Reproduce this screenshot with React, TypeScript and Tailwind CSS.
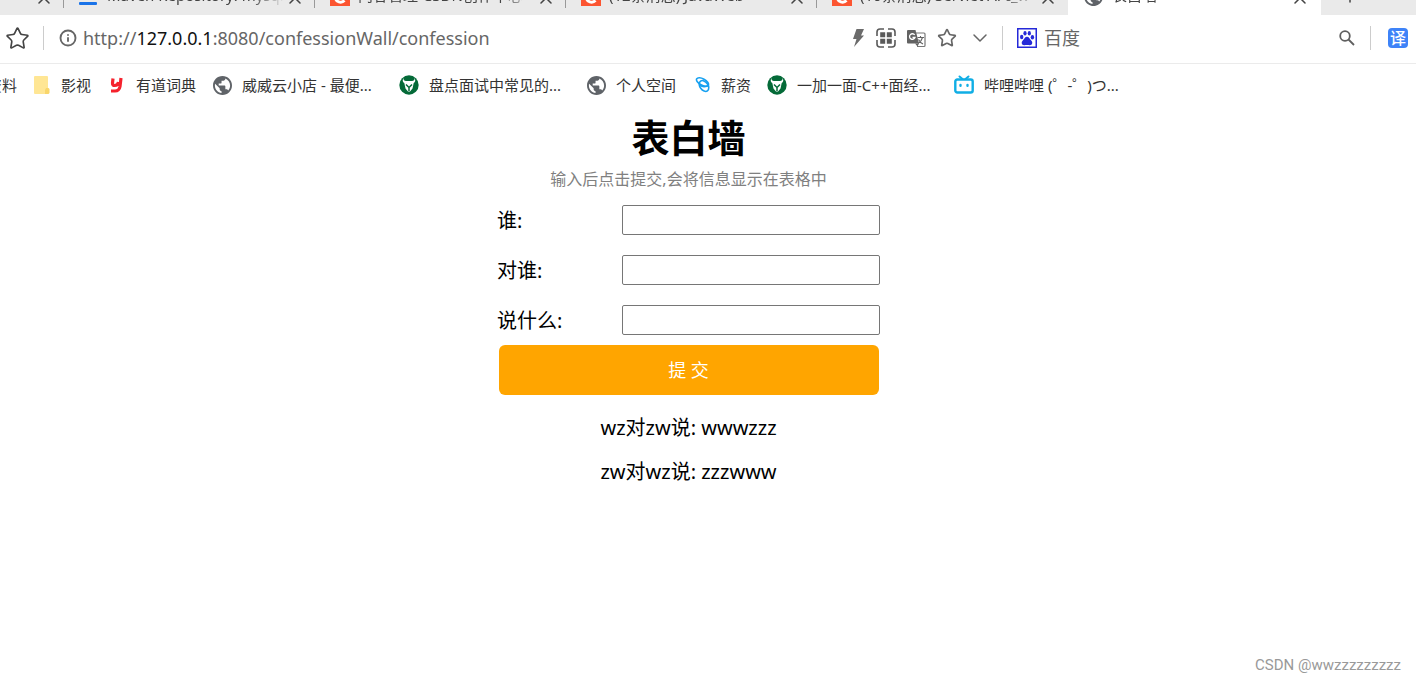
import type { ReactNode } from 'react'
import { ChevronDown, Info, Plus, Star, X } from 'lucide-react'

interface Tab {
  title: string
  icon: ReactNode
  width: string
  active?: boolean
}

interface Bookmark {
  title: string
  icon: ReactNode
  width: string
}

const GlobeIcon = () => (
  <svg width="19" height="19" viewBox="2 2 20 20" className="shrink-0" aria-hidden="true">
    <path d="M12 2C6.480 2 2 6.480 2 12s4.480 10 10 10 10-4.480 10-10S17.520 2 12 2zm-1 17.930c-3.950-.49-7-3.850-7-7.930 0-.62.08-1.210.21-1.790L9 15v1c0 1.100.9 2 2 2v1.930zm6.900-2.540c-.26-.81-1-1.390-1.900-1.390h-1v-3c0-.55-.45-1-1-1H8v-2h2c.55 0 1-.45 1-1V7h2c1.100 0 2-.9 2-2v-.41c2.930 1.190 5 4.060 5 7.410 0 2.080-.8 3.970-2.100 5.390z" fill="#5f6368" />
  </svg>
)

const CsdnIcon = () => (
  <svg width="20" height="20" viewBox="0 0 20 20" className="shrink-0" aria-hidden="true">
    <rect width="20" height="20" fill="#fc5531" />
    <path d="M14.500 6.500C12 4 5.500 5 5.500 11c0 5.500 6 6.500 9 3.500" fill="none" stroke="#fff" strokeWidth="3" />
  </svg>
)

const MavenIcon = () => (
  <svg width="18" height="18" viewBox="0 0 18 18" className="shrink-0" aria-hidden="true">
    <rect y="15" width="18" height="3" rx="1" fill="#1a73e8" />
  </svg>
)

const FolderIcon = () => (
  <svg width="17" height="18" viewBox="0 0 17 18" className="shrink-0" aria-hidden="true">
    <path d="M1 0h12q1 0 1 1v17H1q-1 0-1-1V1q0-1 1-1Z" fill="#ffe694" />
    <path d="M12 12h2.500l1 1v4l-1 1H11v-4Z" fill="#f9d66b" />
  </svg>
)

const YoudaoIcon = () => (
  <svg width="16" height="16" viewBox="0 0 16 16" className="shrink-0" aria-hidden="true">
    <path d="M3 1.500 2.500 6q-.2 2.500 2.200 2.500Q8 8.500 8.500 5M11 1 10 9.500Q9.200 14 5 14H1" fill="none" stroke="#f5222d" strokeWidth="3.200" />
  </svg>
)

const BullIcon = () => (
  <svg width="20" height="20" viewBox="0 0 20 20" className="shrink-0" aria-hidden="true">
    <circle cx="10" cy="10" r="9.700" fill="#046a38" />
    <path d="M4.500 3C3 6 4 7.200 5.300 8l1.200 5.500L9 16.500h2l2.500-3L14.700 8C16 7.200 17 6 15.500 3c.2 2.300-.8 3-2.500 3H7c-1.700 0-2.700-.7-2.500-3Z" fill="#fff" />
    <path d="m7 9.500 3 3 3-3M10 12.500V16" fill="none" stroke="#046a38" strokeWidth="1.500" />
  </svg>
)

const SalaryIcon = () => (
  <svg width="16" height="16" viewBox="0 0 16 16" className="shrink-0" aria-hidden="true">
    <g fill="none" stroke="#16a0f0" strokeWidth="1.600">
      <ellipse cx="7.500" cy="5" rx="6.600" ry="3.200" transform="rotate(28 7.500 5)" />
      <ellipse cx="9" cy="9" rx="6" ry="4" transform="rotate(55 9 9)" />
      <path d="M4 7.500c2.500 2.500 7 3 9.800.5" />
    </g>
  </svg>
)

const BilibiliIcon = () => (
  <svg width="20" height="20" viewBox="0 0 20 20" className="shrink-0" aria-hidden="true">
    <g fill="none" stroke="#10aee5" strokeLinecap="round">
      <rect x="1.300" y="4.500" width="17.400" height="13" rx="2" strokeWidth="2.400" />
      <path d="m5.500 1.500 3 2.500m6-2.500-3 2.500" strokeWidth="2" />
      <path d="M6.500 10v.8m7-.8v.8" strokeWidth="2.400" />
    </g>
  </svg>
)

const BoltIcon = () => (
  <svg width="13" height="20" viewBox="0 0 13 20" aria-hidden="true">
    <path d="M4.500 1H12L9 7.500h3L2 19l2.500-8H1Z" fill="#6b6b6b" />
  </svg>
)

const QrIcon = () => (
  <svg width="20" height="20" viewBox="0 0 20 20" aria-hidden="true">
    <path d="M1 8V4q0-3 3-3h4m4 0h4q3 0 3 3v4m0 4v4q0 3-3 3h-4m-4 0H4q-3 0-3-3v-4" fill="none" stroke="#5a5a5a" strokeWidth="1.600" />
    <path d="M4.200 4.200h5v5h-5Zm6.600 0h5v5h-5Zm-6.600 6.600h5v5h-5Zm6.600 0h5v5h-5Z" fill="#5a5a5a" />
  </svg>
)

const TranslateIcon = () => (
  <svg width="19" height="19" viewBox="0 0 19 19" aria-hidden="true">
    <path d="M9 4h8q1 0 1 1v11.500q0 1-1 1h-7" fill="#fff" stroke="#777" strokeWidth="1.200" />
    <path d="M1 1h7.500L12 14.500H1q-1 0-1-1V2q0-1 1-1Z" fill="#636363" />
    <path d="M7.700 6A2.800 2.800 0 1 0 8 8.500H5.500" fill="none" stroke="#fff" strokeWidth="1.300" />
    <path d="M10.500 8.500H17M13.500 7v1.500m2 0q-1 4-4.500 6m.5-4q1.500 3 4.500 4.500" fill="none" stroke="#636363" strokeWidth="1.100" />
    <path d="m8 14.500 2.500 3 1.500-3Z" fill="#636363" />
  </svg>
)

const BaiduIcon = () => (
  <svg width="20" height="20" viewBox="0 0 20 20" className="shrink-0" aria-hidden="true">
    <rect x=".75" y=".75" width="18.500" height="18.500" fill="#fff" stroke="#2529d8" strokeWidth="1.500" />
    <g fill="#2529d8">
      <ellipse cx="4.700" cy="9" rx="1.700" ry="2.200" />
      <ellipse cx="8" cy="5.200" rx="1.600" ry="2.200" />
      <ellipse cx="12.300" cy="5.200" rx="1.600" ry="2.200" />
      <ellipse cx="15.400" cy="9.200" rx="1.700" ry="2.200" />
      <path d="M10 8.800c2 0 2.600 2.200 4.200 3.700 2 1.900 1 4.900-1.500 4.700-1.800-.2-3.600-.2-5.400 0-2.500.2-3.500-2.800-1.500-4.700C7.400 11 8 8.800 10 8.800Z" />
    </g>
  </svg>
)

const SearchIcon = () => (
  <svg width="16" height="16" viewBox="0 0 16 16" aria-hidden="true">
    <g fill="none" stroke="#5f5f5f" strokeWidth="1.800">
      <circle cx="6" cy="6" r="4.800" />
      <path d="m9.500 9.500 5.500 5.500" />
    </g>
  </svg>
)

const tabs: Tab[] = [
  { title: 'Maven Repository: mysql', icon: <MavenIcon />, width: 'w-[251px]' },
  { title: '内容管理-CSDN创作中心', icon: <CsdnIcon />, width: 'w-[251px]' },
  { title: '(12条消息) JavaWeb', icon: <CsdnIcon />, width: 'w-[251px]' },
  { title: '(10条消息) Servlet API_w', icon: <CsdnIcon />, width: 'w-[251px]' },
  { title: '表白墙', icon: <GlobeIcon />, width: 'w-[253px]', active: true },
]

const bookmarks: Bookmark[] = [
  { title: '影视', icon: <FolderIcon />, width: 'w-[76px]' },
  { title: '有道词典', icon: <YoudaoIcon />, width: 'w-[103px]' },
  { title: '威威云小店 - 最便...', icon: <GlobeIcon />, width: 'w-[186px]' },
  { title: '盘点面试中常见的...', icon: <BullIcon />, width: 'w-[188px]' },
  { title: '个人空间', icon: <GlobeIcon />, width: 'w-[108px]' },
  { title: '薪资', icon: <SalaryIcon />, width: 'w-[72px]' },
  { title: '一加一面-C++面经...', icon: <BullIcon />, width: 'w-[187px]' },
  { title: '哔哩哔哩 (゜-゜)つ...', icon: <BilibiliIcon />, width: 'w-[180px]' },
]

const fields = [
  { id: 'from', label: '谁:' },
  { id: 'to', label: '对谁:' },
  { id: 'message', label: '说什么:' },
]

const messages = ['wz对zw说: wwwzzz', 'zw对wz说: zzzwww']

function CloseButton() {
  return (
    <button type="button" aria-label="关闭" className="flex h-[29px] items-end">
      <X size={20} strokeWidth={1.800} />
    </button>
  )
}

// only the lower edge of the strip is visible, so tabs hang from the bottom
function TabStrip() {
  return (
    <div className="flex h-[15px] items-end overflow-hidden bg-[#eaeaea] text-[#444]">
      <div className="flex h-9 w-16 shrink-0 items-start justify-end pr-[10px]">
        <CloseButton />
      </div>
      {tabs.map(tab => (
        <div
          key={tab.title}
          className={`flex h-9 shrink-0 items-start ${tab.width} ${tab.active ? 'bg-white pl-4' : 'pl-[15px]'} relative`}
        >
          {!tab.active && <span className="absolute bottom-[7px] -left-px h-5 w-px bg-[#999]" />}
          <span className="mt-[7px] flex h-5 w-[19px] items-center">{tab.icon}</span>
          <span className="ml-[9px] mt-1 w-[178px] overflow-hidden whitespace-nowrap text-[15px] leading-6 [mask-image:linear-gradient(to_right,black_80%,transparent)]">{tab.title}</span>
          <CloseButton />
        </div>
      ))}
      <button type="button" aria-label="新标签页" className="ml-[17px] flex h-9 items-start pt-1">
        <Plus size={24} strokeWidth={1.500} />
      </button>
    </div>
  )
}

function AddressBar() {
  return (
    <div className="flex h-[49px] items-center border-b border-[#ebebeb] pl-[5px] pr-2 pb-[2px] text-[#666]">
      <button type="button" aria-label="收藏"><Star size={25} strokeWidth={1.600} className="text-[#444]" /></button>
      <span className="ml-[13px] h-6 w-px bg-[#ccc]" />
      <Info size={18} strokeWidth={2.500} className="ml-[15px]" />
      <a href="#confession" className="ml-[6px] text-[18px] leading-6">
        http://<span className="text-[#111]">127.0.0.1</span>:8080/confessionWall/confession
      </a>
      <div className="ml-auto flex w-[556px] items-center">
        <div className="flex items-center gap-[11px]">
          <button type="button" aria-label="极速模式"><BoltIcon /></button>
          <button type="button" aria-label="二维码"><QrIcon /></button>
          <button type="button" aria-label="翻译"><TranslateIcon /></button>
          <button type="button" aria-label="收藏本页"><Star size={20} strokeWidth={2} /></button>
          <button type="button" aria-label="更多"><ChevronDown size={24} strokeWidth={1.500} /></button>
        </div>
        <span className="ml-[10px] mr-[14px] h-6 w-px bg-[#ccc]" />
        <BaiduIcon />
        <span className="ml-[7px] text-[18px] leading-6">百度</span>
        <button type="button" aria-label="搜索" className="ml-auto"><SearchIcon /></button>
        <span className="ml-[15px] h-6 w-px bg-[#ccc]" />
        <button type="button" className="ml-[17px] size-5 rounded bg-[#3e83f8] text-[16px] font-medium leading-5 text-white">译</button>
      </div>
    </div>
  )
}

function Bookmarks() {
  return (
    <nav className="flex h-[42px] items-center overflow-hidden whitespace-nowrap text-[15px] text-[#333]">
      <a href="#docs" className="flex w-[34px] shrink-0">
        <span className="-ml-[13px]">资料</span>
      </a>
      {bookmarks.map(b => (
        <a key={b.title} href="#bookmark" className={`flex shrink-0 items-center gap-[10px] ${b.width}`}>
          {b.icon}
          <span>{b.title}</span>
        </a>
      ))}
    </nav>
  )
}

function ConfessionWall() {
  return (
    <main className="mx-auto flex w-full max-w-[400px] flex-col items-center text-black">
      <h1 className="mt-[6px] text-[38px] font-bold leading-[50px]">表白墙</h1>
      <p className="mt-[5px] text-[16px] leading-6 text-[#808080]">输入后点击提交,会将信息显示在表格中</p>
      <form className="mt-1 flex w-full flex-col items-center" onSubmit={e => e.preventDefault()}>
        {fields.map(f => (
          <div key={f.id} className="flex h-[50px] w-[383px] items-center justify-between">
            <label htmlFor={f.id} className="pt-[2px] text-[20px]">{f.label}</label>
            <input id={f.id} type="text" className="h-[30px] w-[258px] rounded-xs border border-[#767676] bg-white px-1" />
          </div>
        ))}
        <button type="submit" className="h-[50px] w-[380px] rounded-md bg-[#ffa500] text-[18px] text-white">提 交</button>
      </form>
      <div className="mt-[11px] text-[20px]">
        {messages.map(m => <p key={m} className="h-11 leading-[44px]">{m}</p>)}
      </div>
    </main>
  )
}

export default function App() {
  return (
    <div className="flex min-h-screen flex-col bg-white font-['Noto_Sans','Noto_Sans_CJK_SC',sans-serif]">
      <TabStrip />
      <AddressBar />
      <Bookmarks />
      <div className="pr-[39px]">
        <ConfessionWall />
      </div>
      <footer className="mt-auto pb-1 pr-[15px] text-right font-['Roboto',sans-serif] text-[15px] text-[#999]">CSDN @wwzzzzzzzzz</footer>
    </div>
  )
}
